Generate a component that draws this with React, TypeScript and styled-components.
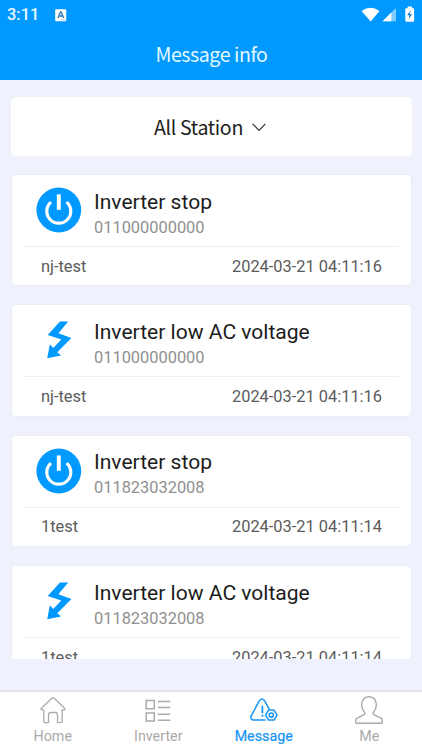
import React from "react";
import styled, { createGlobalStyle } from "styled-components";

const BLUE = "#0099ff";

const GlobalStyle = createGlobalStyle`
  * { box-sizing: border-box; }
  body { margin: 0; background: #eff2fc; font-family: Roboto, sans-serif; }
`;

const Screen = styled.div`
  width: 422px;
  height: 750px;
  display: flex;
  flex-direction: column;
  overflow: hidden;
  background: #eff2fc;
`;

const Header = styled.header`
  height: 80px;
  flex: none;
  background: ${BLUE};
  color: #fff;
`;

const StatusBar = styled.div`
  height: 30px;
  padding: 0 6px 0 7px;
  display: flex;
  align-items: center;
`;

const Clock = styled.span`
  width: 48px;
  font-size: 16.4px;
  line-height: 30px;
  font-weight: 500;
  color: #e6f9ff;
`;

const StatusIcons = styled.div`
  margin-left: auto;
  display: flex;
  align-items: center;
`;

const Title = styled.h1`
  margin: 0;
  height: 50px;
  padding-left: 1px;
  font: 400 19.6px/48px "Noto Sans CJK SC", sans-serif;
  letter-spacing: -0.45px;
  color: #e2f8ff;
  text-align: center;
`;

const StationPicker = styled.button`
  flex: none;
  height: 59px;
  margin: 17px 10px 0 11px;
  padding: 0 3px 0 0;
  border: 0;
  border-radius: 5px;
  background: #fff;
  display: flex;
  align-items: center;
  justify-content: center;
  gap: 9px;
  font: 400 19.6px/30px "Noto Sans CJK SC", sans-serif;
  letter-spacing: -0.35px;
  color: #222;
`;

const MessageList = styled.main`
  flex: none;
  height: 486px;
  margin-top: 17px;
  padding: 2px 11px 0 12px;
  display: flex;
  flex-direction: column;
  gap: 20px;
  overflow: hidden;
`;

const Card = styled.article`
  flex: none;
  height: 110.4px;
  border-radius: 4px;
  background: #fff;
  box-shadow: 0 0 2px rgba(120, 120, 150, 0.14);
`;

const CardTop = styled.div`
  height: 72px;
  margin: 0 12px;
  padding-left: 12px;
  border-bottom: 1px solid #efeff1;
  display: flex;
`;

const IconSlot = styled.div`
  width: 46px;
  padding-top: 12px;
  svg { display: block; }
`;

const Description = styled.div`
  padding: 13.5px 0 0 12px;
`;

const Event = styled.div`
  font-size: 21.05px;
  line-height: 25px;
  color: #1c1c1c;
  white-space: nowrap;
`;

const Serial = styled.div`
  margin-top: 3px;
  font-size: 16.4px;
  line-height: 21px;
  color: #909090;
`;

const CardBottom = styled.div`
  height: 38px;
  padding: 0 29px;
  display: flex;
  align-items: center;
  justify-content: space-between;
  font-size: 16.4px;
  color: #5b5b5b;
`;

const TabBar = styled.nav`
  flex: none;
  height: 60px;
  margin-top: auto;
  border-top: 2px solid #e4e4ec;
  background: #fff;
  display: grid;
  grid-template-columns: repeat(4, 1fr);
`;

const Tab = styled.div<{ $active?: boolean }>`
  display: flex;
  flex-direction: column;
  align-items: center;
  padding-top: 4px;
  color: ${(p) => (p.$active ? "#1694f5" : "#aaa")};
  font-size: 14.3px;
  -webkit-text-stroke: ${(p) => (p.$active ? "0.2px currentColor" : "0")};
  line-height: 18px;
  svg { display: block; margin-bottom: 3px; }
`;

const PowerIcon = () => (
  <svg width="46" height="46" viewBox="0 0 46 46" fill="none">
    <circle cx="22.8" cy="23" r="22.4" fill={BLUE} />
    <path d="M15 15.1A12 12 0 1 0 30.6 15.1" stroke="#fff" strokeWidth="3.2" />
    <path d="M22.8 7.4V22.8" stroke="#fff" strokeWidth="4" />
  </svg>
);

const BoltIcon = () => (
  <svg width="46" height="46" viewBox="0 0 46 46">
    <path fill={BLUE} d="M24 4.4H32.2L22.4 16.3L35.4 21L21.3 35.2L25 38.6L11.2 41.2L13.9 27.3L17.2 31L25.3 22.6L11.7 18.1Z" />
  </svg>
);

const HomeIcon = () => (
  <svg width="28" height="28" viewBox="0 0 28 28" fill="none" stroke="currentColor" strokeWidth="1.3" strokeLinejoin="round">
    <path d="M12.8 2.2Q14 1.2 15.2 2.2L25.6 12.2Q26.6 13.7 25 13.9H23.2V25Q23.2 26.6 21.6 26.6H18.5V19.5Q18.5 16.5 16.3 16.5H11.7Q9.5 16.5 9.5 19.5V26.6H6.4Q4.8 26.6 4.8 25V13.9H3Q1.4 13.7 2.4 12.2Z" />
  </svg>
);

const ListIcon = () => (
  <svg width="28" height="28" viewBox="0 0 28 28" fill="none" stroke="currentColor" strokeWidth="1.5">
    <path d="M2.2 4.6H10.3V12.7H2.2ZM2.2 17H10.3V25.1H2.2ZM13.8 5.5H26.2M13.8 11.5H26.2M13.8 18.2H26.2M13.8 24.2H26.2" />
  </svg>
);

const AlertIcon = () => (
  <svg width="28" height="28" viewBox="0 0 28 28" fill="none" stroke="currentColor" strokeWidth="1.5" strokeLinejoin="round">
    <path d="M15.6 24H3.4Q.1 23.5 1.1 20.1L9.1 5.2Q12 .7 14.9 5.2L19.3 13.4" />
    <path d="M12.4 9.8V17.3M12.4 18.8V20.8" strokeWidth="1.8" />
    <path d="M18.5 14.1H24L27 19.1L24 24.1H18.5L15.6 19.1Z" />
    <circle cx="21.3" cy="19.1" r="2.1" />
  </svg>
);

const PersonIcon = () => (
  <svg width="28" height="28" viewBox="0 0 28 28" fill="none" stroke="currentColor" strokeWidth="1.4" strokeLinejoin="round">
    <path d="M14 .8C6.2.8 4.8 10.7 9.4 16Q11 18.1 8.2 19.2L2.2 22.2Q.6 23.1.6 25.6V26.3Q.6 27.3 2 27.3H26Q27.4 27.3 27.4 26.3V25.6Q27.4 23.1 25.8 22.2L19.8 19.2Q17 18.1 18.6 16C23.2 10.7 21.8.8 14 .8Z" />
  </svg>
);

const KeyboardBadge = () => (
  <svg width="12" height="13" viewBox="0 0 12 13">
    <rect x=".2" y=".2" width="11" height="12" rx="1" fill="#fff" />
    <path d="M3 8.9L5.5 2.9H6.2L8.7 8.9M4 7H7.8" fill="none" stroke="#317eb7" strokeWidth="1.4" />
    <path d="M6.5 10.7H10" stroke="#9aa8b4" strokeWidth=".6" />
  </svg>
);

const SignalIcons = () => (
  <svg width="56" height="18" viewBox="0 0 56 18">
    <path d="M1.5 5Q10.5-1.6 19.5 5L10.7 15.5Z" fill="#fff" />
    <path d="M22.6 15.3L36 2V15.3Z" fill="#80ccff" />
    <path d="M22.6 15.3L31.3 6.6V15.3Z" fill="#fff" />
    <path d="M47.6.5H52V2.2H53.2Q54.1 2.2 54.1 3V14.8Q54.1 15.7 53.2 15.7H46.2Q45.3 15.7 45.3 14.8V3Q45.3 2.2 46.2 2.2H47.6Z" fill="#fff" />
    <path d="M50.6 4.6L47.2 9.2H49.4L48.7 13L52.2 8.2H50Z" fill="#147ec5" />
  </svg>
);

const messages = [
  { kind: "stop", event: "Inverter stop", serial: "011000000000", station: "nj-test", time: "2024-03-21 04:11:16" },
  { kind: "voltage", event: "Inverter low AC voltage", serial: "011000000000", station: "nj-test", time: "2024-03-21 04:11:16" },
  { kind: "stop", event: "Inverter stop", serial: "011823032008", station: "1test", time: "2024-03-21 04:11:14" },
  { kind: "voltage", event: "Inverter low AC voltage", serial: "011823032008", station: "1test", time: "2024-03-21 04:11:14" },
];

const tabs = [
  { label: "Home", Icon: HomeIcon },
  { label: "Inverter", Icon: ListIcon },
  { label: "Message", Icon: AlertIcon },
  { label: "Me", Icon: PersonIcon },
];

export default function App() {
  return (
    <Screen>
      <GlobalStyle />
      <Header>
        <StatusBar>
          <Clock>3:11</Clock>
          <KeyboardBadge />
          <StatusIcons><SignalIcons /></StatusIcons>
        </StatusBar>
        <Title>Message info</Title>
      </Header>
      <StationPicker>
        All Station
        <svg width="14" height="10" viewBox="0 0 14 10" fill="none" stroke="#333" strokeWidth="1.2">
          <path d="M.6 1.8L7 8.3L13.4 1.8" />
        </svg>
      </StationPicker>
      <MessageList>
        {messages.map((m, i) => (
          <Card key={i}>
            <CardTop>
              <IconSlot>{m.kind === "stop" ? <PowerIcon /> : <BoltIcon />}</IconSlot>
              <Description>
                <Event>{m.event}</Event>
                <Serial>{m.serial}</Serial>
              </Description>
            </CardTop>
            <CardBottom>
              <span>{m.station}</span>
              <span>{m.time}</span>
            </CardBottom>
          </Card>
        ))}
      </MessageList>
      <TabBar>
        {tabs.map(({ label, Icon }) => (
          <Tab key={label} $active={label === "Message"}>
            <Icon />
            {label}
          </Tab>
        ))}
      </TabBar>
    </Screen>
  );
}
